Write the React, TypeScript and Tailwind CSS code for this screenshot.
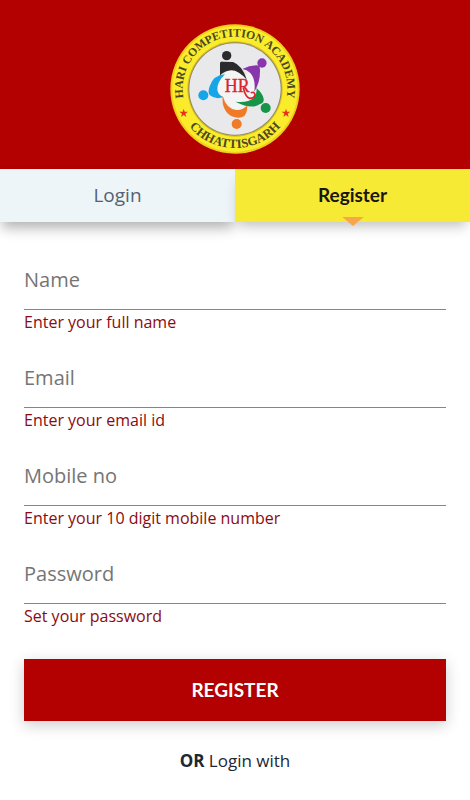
import React, { useState } from 'react'

const fields = [
  { id: 'name', type: 'text', placeholder: 'Name', hint: 'Enter your full name' },
  { id: 'email', type: 'email', placeholder: 'Email', hint: 'Enter your email id' },
  { id: 'mobile', type: 'tel', placeholder: 'Mobile no', hint: 'Enter your 10 digit mobile number' },
  { id: 'password', type: 'password', placeholder: 'Password', hint: 'Set your password' },
];

const Logo = () => (
  <svg viewBox="30 27 390 390" className="w-[130px] h-[130px]" role="img" aria-label="Hari Competition Academy">
    <defs>
      <path id="topArc" d="M 76.2 272 A 157 157 0 1 1 373.8 272" />
      <path id="bottomArc" d="M 55 276 A 179 179 0 0 0 395 276" />
    </defs>
    <circle cx="225" cy="222" r="194" fill="#f0cf1c" />
    <circle cx="225" cy="222" r="188" fill="#faec2b" />
    <circle cx="225" cy="222" r="143" fill="#d9bd1d" />
    <circle cx="225" cy="222" r="140" fill="#8f8a66" />
    <circle cx="225" cy="222" r="137" fill="#e9e9eb" />
    <g fill="#4a4820" fontFamily="'Liberation Serif', serif" fontWeight="bold" textAnchor="middle">
      <text fontSize="35"><textPath href="#topArc" startOffset="50%">HARI COMPETITION ACADEMY</textPath></text>
      <text fontSize="38"><textPath href="#bottomArc" startOffset="50%">CHHATTISGARH</textPath></text>
    </g>
    <path d="M71 281l3 9 10 0-8 6 3 10-8-6-8 6 3-10-8-6 10 0z" fill="#e8331c" />
    <path d="M378 281l3 9 10 0-8 6 3 10-8-6-8 6 3-10-8-6 10 0z" fill="#e8331c" />

    <path d="M203 165Q231 158 256 188Q262 168 272 169Q292 190 283 226Q286 248 278 256Q256 266 232 262Q258 272 258 276Q240 292 222 285Q200 270 190 245Q172 244 169 229Q166 204 190 182Z" fill="#f4f4f5" />

    <circle cx="200" cy="122" r="14" fill="#2b2a2d" />
    <path d="M180 182V145Q180 139 188 140L219 141Q247 151 261 195Q231 160 205 167Q188 171 180 182Z" fill="#2b2a2d" />
    <circle cx="306" cy="144" r="14" fill="#8936ad" />
    <path d="M247 162Q269 151 291 151Q300 152 300 165Q301 202 283 230Q288 190 270 173Q261 164 247 162Z" fill="#8936ad" />
    <circle cx="317" cy="279" r="15" fill="#169448" />
    <path d="M226 260Q264 264 280 250Q293 236 289 219Q308 235 311 251Q313 264 300 267Q277 285 226 260Z" fill="#169448" />
    <circle cx="230" cy="327" r="15" fill="#ef7b28" />
    <path d="M188 242Q198 281 229 285Q249 286 262 271Q262 302 247 306Q233 311 215 304Q184 286 188 242Z" fill="#ef7b28" />
    <circle cx="130" cy="241" r="15" fill="#16a5e7" />
    <path d="M195 178Q169 203 172 226Q176 241 190 247Q165 254 150 241Q142 233 149 214Q160 180 195 178Z" fill="#16a5e7" />

    <g fill="#d9262e" stroke="#d9262e" strokeWidth="1">
      <text x="194" y="232" fontFamily="'Liberation Serif', serif" fontSize="54">HR</text>
      <path d="M250 219Q257 247 269 250Q284 250 285 238Q282 229 274 233" fill="none" strokeWidth="5" strokeLinecap="round" />
    </g>
  </svg>
)

export default function App() {
  const [tab, setTab] = useState('register');

  return (
    <div className="min-h-screen bg-white font-['Open_Sans','Noto_Sans',sans-serif]">
      <header className="flex justify-center bg-[#b30000] pt-6 pb-[15px]">
        <Logo />
      </header>
      <nav className="grid grid-cols-2">
        <button
          type="button"
          onClick={() => setTab('login')}
          className="h-[53px] bg-[#edf5f8] text-[19px] text-[#56616f] shadow-[0_8px_12px_-2px_rgba(0,0,0,0.3)]"
        >
          Login
        </button>
        <button
          type="button"
          aria-pressed={tab === 'register'}
          onClick={() => setTab('register')}
          className="relative h-[53px] bg-[#f7ea34] font-['Lato',sans-serif] text-[19px] font-bold text-[#17170f] shadow-[0_8px_12px_-4px_rgba(0,0,0,0.25)]"
        >
          Register
          <svg viewBox="0 0 24 10" className="absolute left-1/2 -bottom-1 h-[9px] w-6 -translate-x-1/2">
            <path d="M0 0h24L12 10z" fill="#f9a64a" />
          </svg>
        </button>
      </nav>
      <form className="px-6 pt-7" onSubmit={(e) => e.preventDefault()}>
        <div className="space-y-[14px]">
          {fields.map((field) => (
            <div key={field.id}>
              <input
                id={field.id}
                type={field.type}
                placeholder={field.placeholder}
                className="block h-[60px] w-full border-b border-[#6b9096] bg-transparent text-xl text-gray-800 placeholder:text-[#757575] focus:outline-none"
              />
              <label htmlFor={field.id} className="block text-base text-[#8c0a10]">{field.hint}</label>
            </div>
          ))}
        </div>
        <button
          type="submit"
          className="mt-[31px] h-[62px] w-full bg-[#b30000] font-['Lato',sans-serif] text-[19px] font-bold text-white shadow-[0_4px_14px_rgba(0,0,0,0.2)]"
        >
          REGISTER
        </button>
      </form>
      <p className="pt-7 text-center text-[17px] leading-6 text-[#1c2733]">
        <b className="font-bold">OR</b> Login with
      </p>
    </div>
  );
}
